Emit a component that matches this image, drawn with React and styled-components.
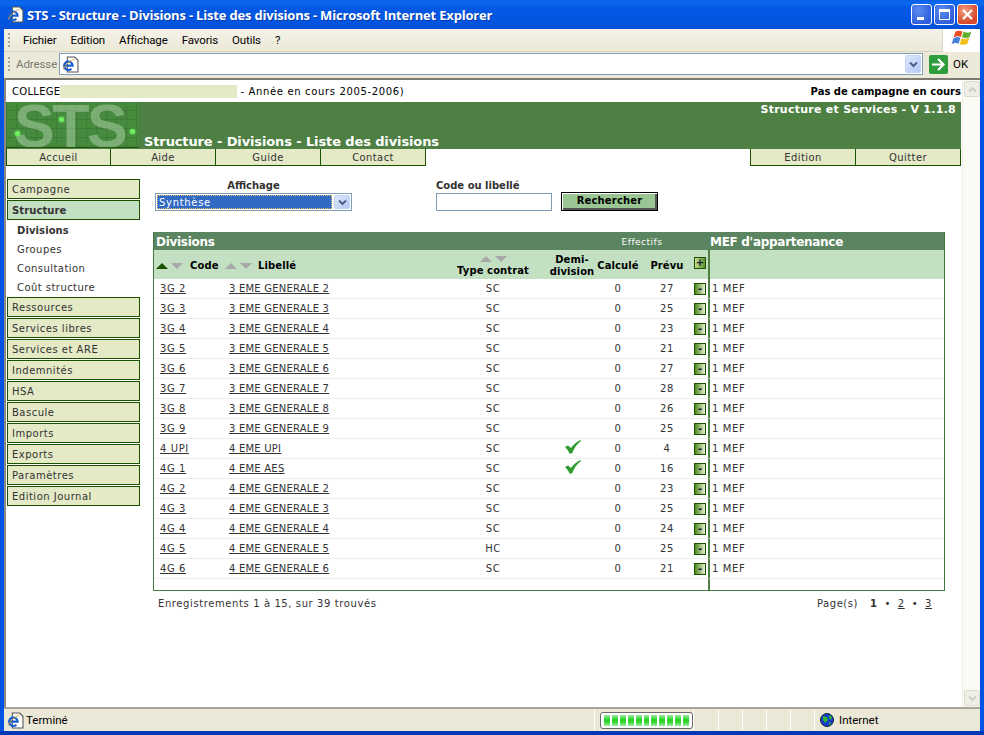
import React from "react";
import styled, { createGlobalStyle } from "styled-components";

const rows = [
  ["3G 2", "3 EME GENERALE 2", "SC", false, 27],
  ["3G 3", "3 EME GENERALE 3", "SC", false, 25],
  ["3G 4", "3 EME GENERALE 4", "SC", false, 23],
  ["3G 5", "3 EME GENERALE 5", "SC", false, 21],
  ["3G 6", "3 EME GENERALE 6", "SC", false, 27],
  ["3G 7", "3 EME GENERALE 7", "SC", false, 28],
  ["3G 8", "3 EME GENERALE 8", "SC", false, 26],
  ["3G 9", "3 EME GENERALE 9", "SC", false, 25],
  ["4 UPI", "4 EME UPI", "SC", true, 4],
  ["4G 1", "4 EME AES", "SC", true, 16],
  ["4G 2", "4 EME GENERALE 2", "SC", false, 23],
  ["4G 3", "4 EME GENERALE 3", "SC", false, 25],
  ["4G 4", "4 EME GENERALE 4", "SC", false, 24],
  ["4G 5", "4 EME GENERALE 5", "HC", false, 25],
  ["4G 6", "4 EME GENERALE 6", "SC", false, 21],
];

const menuTop = ["Ressources", "Services libres", "Services et ARE", "Indemnités", "HSA", "Bascule", "Imports", "Exports", "Paramètres", "Edition Journal"];

const GlobalStyle = createGlobalStyle`
  html, body { margin: 0; padding: 0; background: #fff; }
  * { box-sizing: border-box; }
`;

const Win = styled.div`
  width: 984px;
  height: 735px;
  overflow: hidden;
  display: flex;
  flex-direction: column;
  background: #0053e3;
  font-family: "DejaVu Sans", sans-serif;
`;

const TitleBar = styled.div`
  height: 29px;
  flex: none;
  display: flex;
  align-items: center;
  padding: 0 6px 0 7px;
  background: linear-gradient(#0a60e8 0, #0a6af0 3px, #0458e4 8px, #0256e2 20px, #0450d8 29px);
`;

const TitleText = styled.div`
  margin-left: 3px;
  flex: 1;
  color: #fff;
  font: bold 13px "Open Sans", sans-serif;
  letter-spacing: -0.19px;
  text-shadow: 1px 1px 0 #0a3aa8;
`;

const WinBtn = styled.div`
  width: 21px;
  height: 21px;
  margin-left: 2px;
  border: 1px solid #fff;
  border-radius: 3px;
  background: ${(p) => (p.$close ? "radial-gradient(circle at 35% 30%, #f0a080, #d8482a 70%)" : "radial-gradient(circle at 35% 30%, #5c8cf0, #2a5bd8 80%)")};
  display: flex;
  align-items: center;
  justify-content: center;
`;

const Bars = styled.div`
  flex: none;
  margin: 0 4px;
  background: #ece9d8;
`;

const MenuBar = styled(Bars)`
  height: 23px;
  display: flex;
  align-items: center;
  padding-left: 4px;
  border-bottom: 1px solid #d8d4c4;
  background: linear-gradient(#f4f2e8, #ece9d8);
`;

const Grip = styled.div`
  width: 2px;
  height: 15px;
  margin-right: 13px;
  background: repeating-linear-gradient(#a8a698 0 2px, transparent 2px 4px);
`;

const MenuItems = styled.div`
  flex: 1;
  display: flex;
  gap: 14px;
  font: 11.5px "Roboto", sans-serif;
  letter-spacing: -0.1px;
  color: #000;
`;

const Flag = styled.div`
  width: 38px;
  height: 23px;
  background: #fff;
  border-left: 1px solid #dcd8c8;
  display: flex;
  align-items: center;
  justify-content: center;
`;

const AddressBar = styled(Bars)`
  height: 26px;
  display: flex;
  align-items: flex-start;
  padding: 1px 0 0 4px;
  font: 11.5px/22px "Roboto", sans-serif;
`;

const AddressGrip = styled(Grip)`
  margin: 4px 6px 0 0;
`;

const AddressLabel = styled.span`
  color: #7b7b72;
  width: 43px;
  letter-spacing: -0.1px;
`;

const AddressInput = styled.div`
  width: 864px;
  height: 22px;
  background: #fff;
  border: 1px solid #7f9db9;
  display: flex;
  align-items: center;
  justify-content: space-between;
  padding: 0 1px 0 2px;
`;

const DropArrow = styled.div`
  width: 16px;
  height: ${(p) => p.$h || 18}px;
  border-radius: 2px;
  background: linear-gradient(135deg, #dfe8fb, #b4c8f6);
  border: 1px solid #c4d4f8;
  display: flex;
  align-items: center;
  justify-content: center;
`;

const GoIcon = styled.svg`
  margin: 2px 0 0 6px;
`;

const GoText = styled.span`
  margin-left: 5px;
  color: #000;
`;

const Content = styled.div`
  flex: 1;
  min-height: 0;
  margin: 0 4px;
  display: flex;
  background: #fff;
  border-top: 2px solid #7c7a70;
  border-left: 2px solid #8c8a80;
`;

const Page = styled.div`
  width: 956px;
  flex: none;
  padding-right: 1px;
  color: #333;
  font: 10px "DejaVu Sans", sans-serif;
  letter-spacing: 0.6px;
`;

const ScrollBar = styled.div`
  flex: 1;
  display: flex;
  flex-direction: column;
  justify-content: space-between;
  background: #fbfbf6;
  border-left: 1px solid #efeee6;
`;

const ScrollBtn = styled.div`
  width: 16px;
  height: 16px;
  margin: 1px 0 1px 1px;
  border: 1px solid #dcdbd0;
  border-radius: 2px;
  background: #f0efe6;
  display: flex;
  align-items: center;
  justify-content: center;
`;

const TopLine = styled.div`
  height: 22px;
  display: flex;
  align-items: center;
  padding-left: 6px;
  color: #000;
  letter-spacing: 0.65px;
`;

const CollegeName = styled.span`
  letter-spacing: 0.3px;
`;

const College = styled.span`
  display: inline-block;
  width: 177px;
  height: 13px;
  margin-right: 3px;
  background: #e4e9c6;
`;

const Campaign = styled.b`
  margin-left: auto;
  letter-spacing: 0;
`;

const Banner = styled.div`
  height: 47px;
  display: flex;
  background: #4e7f43;
  color: #fff;
`;

const Logo = styled.div`
  position: relative;
  width: 133px;
  height: 46px;
  flex: none;
  overflow: hidden;
  background-color: #468a3d;
  background-image:
    repeating-linear-gradient(90deg, #3e7c36 0 1px, transparent 1px 10px),
    repeating-linear-gradient(0deg, #3e7c36 0 1px, transparent 1px 9px);
  border-bottom: 1px solid #1f5a10;
`;

const LogoMark = styled.svg`
  display: block;
`;

const LogoText = styled.text`
  font: bold 61px "Liberation Sans", sans-serif;
  letter-spacing: -2.5px;
  fill: rgba(170, 205, 165, 0.55);
`;

const Spark = styled.i`
  position: absolute;
  left: ${(p) => p.$x}px;
  top: ${(p) => p.$y}px;
  width: 5px;
  height: 5px;
  border-radius: 50%;
  background: #6cf060;
  box-shadow: 0 0 3px #7cf070;
`;

const BannerMain = styled.div`
  flex: 1;
  display: flex;
  flex-direction: column;
  justify-content: space-between;
  padding: 1px 5px 0 5px;
  font-weight: bold;
`;

const Version = styled.div`
  align-self: flex-end;
  font-size: 11px;
  letter-spacing: 0.26px;
  line-height: 14px;
`;

const BannerTitle = styled.div`
  font: bold 13px/14px "DejaVu Sans", sans-serif;
  letter-spacing: -0.12px;
`;

const Tabs = styled.div`
  height: 17px;
  display: flex;
  justify-content: space-between;
`;

const TabGroup = styled.div`
  display: flex;
`;

const Tab = styled.div`
  width: ${(p) => (p.$wide ? 106 : 105)}px;
  height: 17px;
  text-align: center;
  line-height: 17px;
  letter-spacing: 0.4px;
  background: #e4e9c6;
  border-right: 1px solid #1b5200;
  border-bottom: 1px solid #1b5200;
  border-left: ${(p) => (p.$first ? "1px solid #1b5200" : "none")};
`;

const Body = styled.div`
  display: flex;
  padding: 13px 0 0 1px;
`;

const Side = styled.div`
  width: 133px;
  flex: none;
  display: flex;
  flex-direction: column;
  gap: 1px;
`;

const SideItem = styled.div`
  height: 20px;
  padding-left: 4px;
  line-height: 19px;
  background: ${(p) => (p.$active ? "#c3e0c3" : "#e4e9c6")};
  border: 1px solid #1b5200;
  font-weight: ${(p) => (p.$active ? "bold" : "normal")};
  letter-spacing: ${(p) => (p.$active ? "0.1px" : "0.5px")};
`;

const SubMenu = styled.div`
  padding-left: 10px;
  margin-bottom: -1px;
`;

const SubItem = styled.div`
  height: 19px;
  line-height: 19px;
  font-weight: ${(p) => (p.$active ? "bold" : "normal")};
  letter-spacing: ${(p) => (p.$active ? "0.1px" : "0.45px")};
`;

const Main = styled.div`
  margin-left: 13px;
  width: 792px;
`;

const SearchForm = styled.div`
  height: 53px;
  display: flex;
  margin-left: 2px;
`;

const Field = styled.div`
  width: 281px;
  display: flex;
  flex-direction: column;
`;

const FieldLabel = styled.b`
  display: block;
  width: ${(p) => p.$width || "auto"};
  height: 14px;
  line-height: 13px;
  letter-spacing: 0;
  text-align: ${(p) => p.$align || "left"};
`;

const SelectBox = styled.div`
  width: 197px;
  height: 18px;
  border: 1px solid #7f9db9;
  padding: 1px;
  display: flex;
  gap: 2px;
`;

const SelectValue = styled.div`
  flex: 1;
  background: #316ac5;
  color: #fff;
  outline: 1px dotted #e8c060;
  outline-offset: -1px;
  line-height: 15px;
  padding-left: 2px;
  letter-spacing: 0.7px;
`;

const SearchRow = styled.div`
  display: flex;
  gap: 9px;
  margin-top: -1px;
`;

const SearchInput = styled.div`
  width: 116px;
  height: 18px;
  margin-top: 1px;
  background: #fff;
  border: 1px solid #7f9db9;
`;

const SearchButton = styled.div`
  width: 97px;
  height: 19px;
  border: 1px solid #000;
  background: #9ac694;
  box-shadow: inset 1px 1px 0 #fff, inset -2px -2px 0 #555;
  color: #000;
  font-weight: bold;
  text-align: center;
  line-height: 16px;
  letter-spacing: 0.15px;
`;

const Panel = styled.div`
  border: 1px solid #3f7a3f;
  border-top: none;
  height: 359px;
  background: #fff;
`;

const Grid = styled.table`
  width: 100%;
  border-collapse: separate;
  border-spacing: 0;
  table-layout: fixed;
`;

const DarkRow = styled.tr`
  height: 18px;
  background: #5a8560;
  color: #fff;
`;

const DarkCell = styled.th`
  padding: 1px 0 0 2px;
  text-align: left;
  font-size: 12px;
  font-weight: bold;
  letter-spacing: -0.3px;
`;

const EffectifsCell = styled.th`
  padding: 1px 20px 0 0;
  text-align: center;
  font-size: 9px;
  font-weight: normal;
  letter-spacing: 0.5px;
`;

const MefCell = styled(DarkCell)`
  padding-left: 0;
  border-left: 2px solid transparent;
`;

const HeadRow = styled.tr`
  height: 29px;
  background: #c3e0c3;
  color: #000;
`;

const HeadCell = styled.th`
  padding: 3px 0 0 ${(p) => p.$pad || 0}px;
  font-size: 10px;
  line-height: 12px;
  font-weight: bold;
  letter-spacing: 0.1px;
  text-align: ${(p) => p.$align || "center"};
  border-left: ${(p) => (p.$sep ? "2px solid #4e7f43" : "none")};
`;

const ExpandHead = styled(HeadCell)`
  vertical-align: top;
  padding-top: 7px;
  line-height: 10px;
`;

const SortLine = styled.span`
  display: flex;
  align-items: center;
  gap: ${(p) => p.$gap || 8}px;
  padding-left: ${(p) => p.$pad || 0}px;
  margin-bottom: ${(p) => p.$below || 0}px;
  justify-content: ${(p) => p.$justify || "flex-start"};
`;

const Arrow = styled.i`
  display: block;
  width: 0;
  height: 0;
  border-left: 6px solid transparent;
  border-right: 6px solid transparent;
  ${(p) => (p.$down ? `border-top: 6px solid ${p.$color || "#a8a8a8"};` : `border-bottom: 6px solid ${p.$color || "#a8a8a8"};`)}
`;

const ArrowPair = styled.span`
  display: inline-flex;
  gap: 3px;
`;

const Row = styled.tr`
  height: 20px;
  td { border-bottom: 1px solid #eeeeee; }
`;

const Cell = styled.td`
  padding: 0 0 0 ${(p) => p.$pad || 0}px;
  text-align: ${(p) => p.$align || "center"};
  border-left: ${(p) => (p.$sep ? "2px solid #4e7f43" : "none")};
  white-space: nowrap;
`;

const RowLink = styled.a`
  color: #333;
  text-decoration: underline;
  cursor: pointer;
  letter-spacing: ${(p) => (p.$tight ? "0.22px" : "inherit")};
`;

const ExpandBtn = styled.span`
  display: inline-flex;
  align-items: center;
  justify-content: center;
  width: 12px;
  height: 12px;
  vertical-align: middle;
  border: 1px solid #1b5200;
  background: ${(p) => (p.$plus ? "linear-gradient(90deg, #c8dc90, #5c9030)" : "linear-gradient(90deg, #4f8a20, #e8efd0)")};
  color: #123;
  font: bold 10px/10px "DejaVu Sans", sans-serif;
  letter-spacing: 0;
`;

const TableEnd = styled.div`
  height: 11px;
  position: relative;
`;

const Divider = styled.div`
  position: absolute;
  top: 0;
  bottom: 0;
  left: 554px;
  width: 2px;
  background: #4e7f43;
`;

const Pager = styled.div`
  display: flex;
  justify-content: space-between;
  padding: 6px 13px 0 5px;
  line-height: 14px;
`;

const PagerLinks = styled.span`
  display: flex;
  gap: 7px;
  letter-spacing: 0.52px;
`;

const CurrentPage = styled.b`
  margin-left: 5px;
`;

const StatusBar = styled.div`
  height: 24px;
  flex: none;
  margin: 0 4px;
  padding-left: 3px;
  display: flex;
  align-items: center;
  position: relative;
  background: #ebe8d8;
  border-top: 2px solid #a8a698;
  font: 11.5px "Roboto", sans-serif;
  color: #000;
`;

const StatusMessage = styled.span`
  flex: 1;
  margin-left: 2px;
`;

const StatusText = styled.span`
  margin-left: 5px;
`;

const StatusCell = styled.div`
  flex: none;
  width: ${(p) => p.$w}px;
  height: 20px;
  border-left: 1px solid #fff;
  display: flex;
  align-items: center;
  padding-left: ${(p) => p.$pad || 0}px;
`;

const Progress = styled.div`
  width: 93px;
  height: 17px;
  border: 1px solid #686868;
  border-radius: 3px;
  background: #fff;
  padding: 2px 3px;
  display: flex;
  gap: 2px;
`;

const ProgressBlock = styled.i`
  display: block;
  width: 6px;
  background: linear-gradient(#a0eca0, #2ed32e 40%, #2ed32e 60%, #a0eca0);
`;

const Bottom = styled.div`
  height: 4px;
  flex: none;
  background: #0039b8;
`;

const CheckIcon = styled.svg`
  vertical-align: middle;
  margin: -4px 0 0 2px;
`;

function IeIcon({ size = 17 }) {
  return (
    <svg width={size} height={size} viewBox="0 0 16 16">
      <path d="M5 1h7l3 3v11H5z" fill="#fff" stroke="#555" />
      <path d="M2.500 9h7.500a4 4 0 1 0-1.200 3" fill="none" stroke="#1a5fd0" strokeWidth="2" />
      <path d="M1 13c2-5 7-9 11-10" fill="none" stroke="#e0a020" strokeWidth="0.8" />
    </svg>
  );
}

function Chevron({ color = "#4d6185", up }) {
  return (
    <svg width="9" height="7" viewBox="0 0 9 7">
      <path d={up ? "M1 5.5 4.5 2 8 5.5" : "M1 1.5 4.5 5 8 1.5"} fill="none" stroke={color} strokeWidth="2" />
    </svg>
  );
}

function Check() {
  return (
    <CheckIcon width="16" height="14" viewBox="0 0 16 14">
      <path d="M0 7 3 5.500 6 8C8 5 11 2 15.500 0L16 1C12 4 9 8 7 13.500L4.500 13.500C3.500 11 2 9 0 7z" fill="#2f9b2f" />
    </CheckIcon>
  );
}

function App() {
  return (
    <Win>
      <GlobalStyle />
      <TitleBar>
        <IeIcon />
        <TitleText>STS - Structure - Divisions - Liste des divisions - Microsoft Internet Explorer</TitleText>
        <WinBtn>
          <svg width="13" height="13" viewBox="0 0 13 13"><rect x="2" y="9" width="7" height="3" fill="#fff" /></svg>
        </WinBtn>
        <WinBtn>
          <svg width="13" height="13" viewBox="0 0 13 13"><path d="M1.500 3.500h10v8h-10z" fill="none" stroke="#fff" /><rect x="1" y="1" width="11" height="3" fill="#fff" /></svg>
        </WinBtn>
        <WinBtn $close>
          <svg width="13" height="13" viewBox="0 0 13 13"><path d="M2 2l9 9M11 2l-9 9" stroke="#fff" strokeWidth="2.2" /></svg>
        </WinBtn>
      </TitleBar>
      <MenuBar>
        <Grip />
        <MenuItems>
          <span>Fichier</span>
          <span>Edition</span>
          <span>Affichage</span>
          <span>Favoris</span>
          <span>Outils</span>
          <span>?</span>
        </MenuItems>
        <Flag>
          <svg width="22" height="20" viewBox="0 0 20 18">
            <path d="M2 8C4 6 6 6 8.500 7L7 12.500C5 11.500 3 11.500 0.500 13z" fill="#4a80d8" />
            <path d="M9.500 7.300C12 8.300 14 8.300 16.500 7L15 12.500C13 13.500 10.500 13.500 8 12.800z" fill="#f2c020" />
            <path d="M4 1.500C6 0.200 8 0.200 10.500 1.300L9 6.300C7 5.300 5 5.300 2.300 6.800z" fill="#e85020" />
            <path d="M11.500 1.600C14 2.600 16 2.600 18.500 1.200L17 6.200C15 7.400 12.500 7.400 10 6.600z" fill="#60b030" />
          </svg>
        </Flag>
      </MenuBar>
      <AddressBar>
        <AddressGrip />
        <AddressLabel>Adresse</AddressLabel>
        <AddressInput>
          <IeIcon />
          <DropArrow><Chevron /></DropArrow>
        </AddressInput>
        <GoIcon width="19" height="19" viewBox="0 0 19 19">
          <rect width="19" height="19" rx="2" fill="#2e9e3c" />
          <path d="M3 9.500h11M9 4l5.500 5.500L9 15" fill="none" stroke="#fff" strokeWidth="2.2" />
        </GoIcon>
        <GoText>OK</GoText>
      </AddressBar>
      <Content>
        <Page>
          <TopLine>
            <CollegeName>COLLEGE</CollegeName>
            <College />
            - Année en cours 2005-2006)
            <Campaign>Pas de campagne en cours</Campaign>
          </TopLine>
          <Banner>
            <Logo>
              <LogoMark width="133" height="46" viewBox="0 0 133 46">
                <LogoText x="8" y="45">STS</LogoText>
              </LogoMark>
              <Spark $x={53} $y={15} />
              <Spark $x={9} $y={29} />
              <Spark $x={124} $y={27} />
            </Logo>
            <BannerMain>
              <Version>Structure et Services - V 1.1.8</Version>
              <BannerTitle>Structure - Divisions - Liste des divisions</BannerTitle>
            </BannerMain>
          </Banner>
          <Tabs>
            <TabGroup>
              <Tab $first>Accueil</Tab>
              <Tab>Aide</Tab>
              <Tab>Guide</Tab>
              <Tab>Contact</Tab>
            </TabGroup>
            <TabGroup>
              <Tab $first $wide>Edition</Tab>
              <Tab>Quitter</Tab>
            </TabGroup>
          </Tabs>
          <Body>
            <Side>
              <SideItem>Campagne</SideItem>
              <SideItem $active>Structure</SideItem>
              <SubMenu>
                <SubItem $active>Divisions</SubItem>
                <SubItem>Groupes</SubItem>
                <SubItem>Consultation</SubItem>
                <SubItem>Coût structure</SubItem>
              </SubMenu>
              {menuTop.map((m) => (
                <SideItem key={m}>{m}</SideItem>
              ))}
            </Side>
            <Main>
              <SearchForm>
                <Field>
                  <FieldLabel $align="center" $width="197px">Affichage</FieldLabel>
                  <SelectBox>
                    <SelectValue>Synthèse</SelectValue>
                    <DropArrow $h={14}><Chevron /></DropArrow>
                  </SelectBox>
                </Field>
                <Field>
                  <FieldLabel>Code ou libellé</FieldLabel>
                  <SearchRow>
                    <SearchInput />
                    <SearchButton>Rechercher</SearchButton>
                  </SearchRow>
                </Field>
              </SearchForm>
              <Panel>
                <Grid>
                  <colgroup>
                    <col style={{ width: 71 }} />
                    <col style={{ width: 228 }} />
                    <col style={{ width: 80 }} />
                    <col style={{ width: 63 }} />
                    <col style={{ width: 44 }} />
                    <col style={{ width: 54 }} />
                    <col style={{ width: 14 }} />
                    <col />
                  </colgroup>
                  <thead>
                    <DarkRow>
                      <DarkCell colSpan={4}>Divisions</DarkCell>
                      <EffectifsCell colSpan={3}>Effectifs</EffectifsCell>
                      <MefCell>MEF d'appartenance</MefCell>
                    </DarkRow>
                    <HeadRow>
                      <HeadCell $align="left">
                        <SortLine $gap={7} $pad={2}>
                          <ArrowPair><Arrow $color="#1b5200" /><Arrow $down /></ArrowPair>
                          Code
                        </SortLine>
                      </HeadCell>
                      <HeadCell $align="left">
                        <SortLine $gap={6}>
                          <ArrowPair><Arrow /><Arrow $down /></ArrowPair>
                          Libellé
                        </SortLine>
                      </HeadCell>
                      <HeadCell>
                        <SortLine $justify="center" $below={3}><ArrowPair><Arrow /><Arrow $down /></ArrowPair></SortLine>
                        Type contrat
                      </HeadCell>
                      <HeadCell $pad={15}>Demi-<br />division</HeadCell>
                      <HeadCell>Calculé</HeadCell>
                      <HeadCell>Prévu</HeadCell>
                      <ExpandHead $align="left"><ExpandBtn $plus>+</ExpandBtn></ExpandHead>
                      <HeadCell $sep />
                    </HeadRow>
                  </thead>
                  <tbody>
                    {rows.map(([code, label, type, demi, prevu]) => (
                      <Row key={code}>
                        <Cell $align="left" $pad={6}><RowLink>{code}</RowLink></Cell>
                        <Cell $align="left" $pad={4}><RowLink $tight>{label}</RowLink></Cell>
                        <Cell>{type}</Cell>
                        <Cell $pad={15}>{demi && <Check />}</Cell>
                        <Cell>0</Cell>
                        <Cell>{prevu}</Cell>
                        <Cell $align="left"><ExpandBtn>-</ExpandBtn></Cell>
                        <Cell $sep $align="left" $pad={2}>1 MEF</Cell>
                      </Row>
                    ))}
                  </tbody>
                </Grid>
                <TableEnd>
                  <Divider />
                </TableEnd>
              </Panel>
              <Pager>
                <span>Enregistrements 1 à 15, sur 39 trouvés</span>
                <PagerLinks>
                  <span>Page(s)</span>
                  <CurrentPage>1</CurrentPage>
                  <span>•</span>
                  <RowLink>2</RowLink>
                  <span>•</span>
                  <RowLink>3</RowLink>
                </PagerLinks>
              </Pager>
            </Main>
          </Body>
        </Page>
        <ScrollBar>
          <ScrollBtn><Chevron up color="#cfcec4" /></ScrollBtn>
          <ScrollBtn><Chevron color="#cfcec4" /></ScrollBtn>
        </ScrollBar>
      </Content>
      <StatusBar>
        <IeIcon />
        <StatusMessage>Terminé</StatusMessage>
        <StatusCell $w={99} $pad={5}>
          <Progress>
            {Array.from({ length: 11 }, (_, i) => <ProgressBlock key={i} />)}
          </Progress>
        </StatusCell>
        <StatusCell $w={25} />
        <StatusCell $w={24} />
        <StatusCell $w={24} />
        <StatusCell $w={24} />
        <StatusCell $w={24} />
        <StatusCell $w={166} $pad={5}>
          <svg width="14" height="14" viewBox="0 0 14 14">
            <circle cx="7" cy="7" r="6.500" fill="#1a3ad0" stroke="#123" />
            <path d="M3 3l4 1 1 3-3 3-2-3zM9 2l3 2-1 3-2-2zM9 9l2 1-2 3z" fill="#2eb82e" />
          </svg>
          <StatusText>Internet</StatusText>
        </StatusCell>
      </StatusBar>
      <Bottom />
    </Win>
  );
}

export default App;
